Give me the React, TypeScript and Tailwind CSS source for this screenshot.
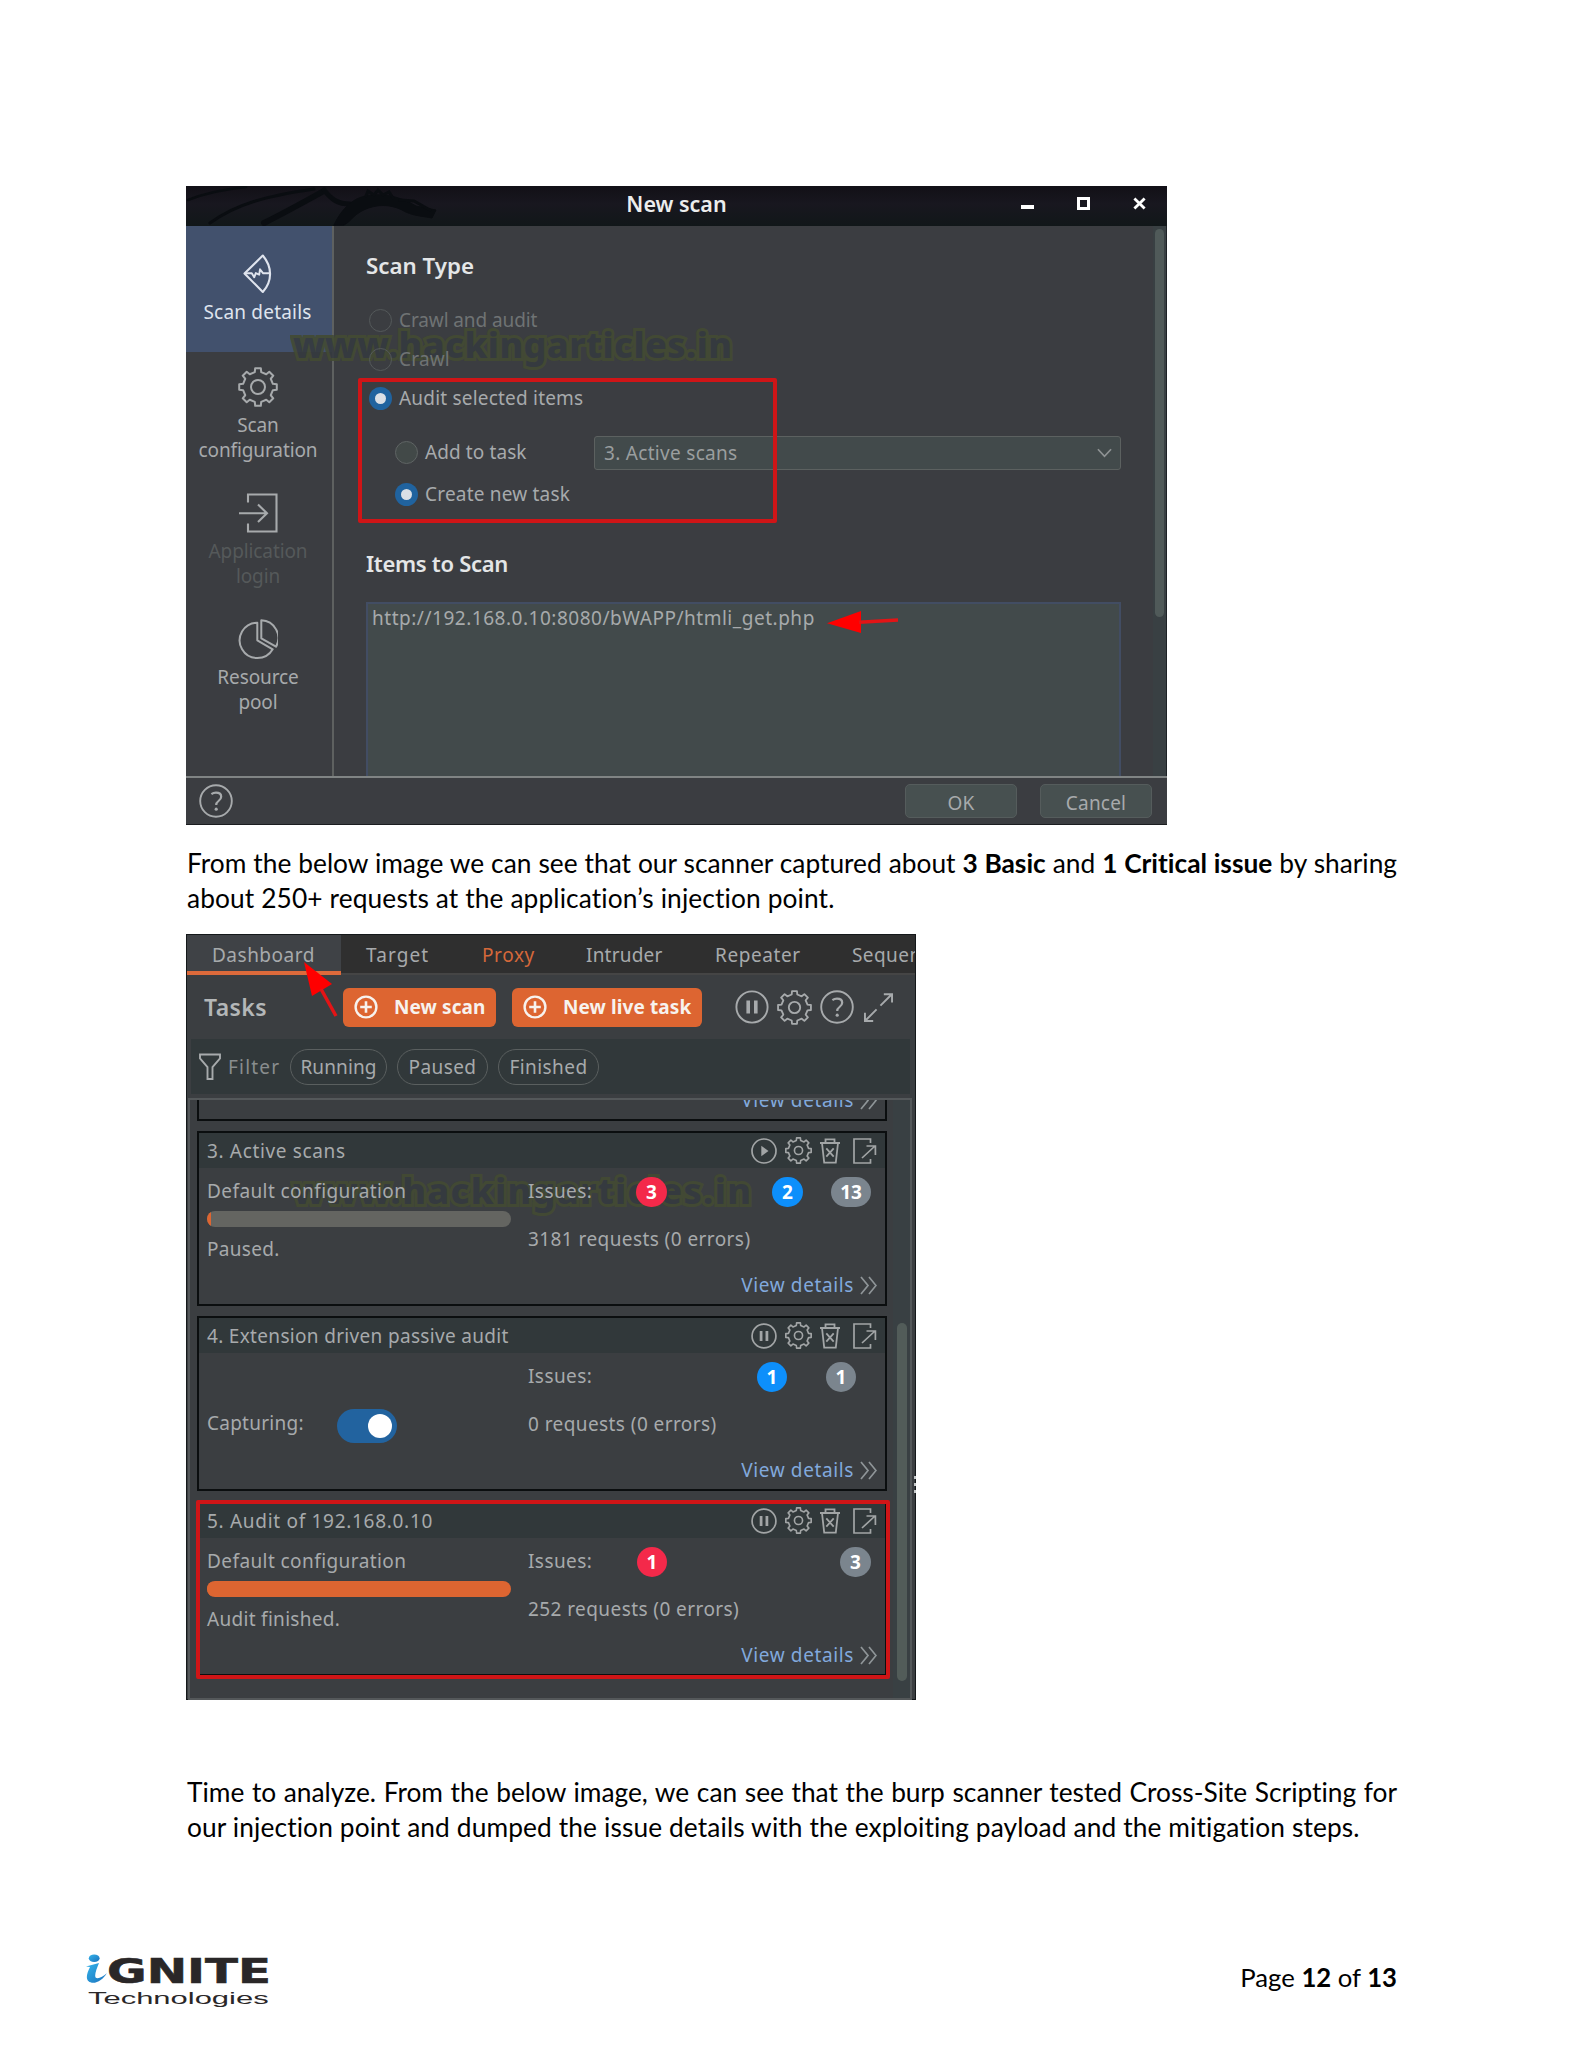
import type { ReactNode } from "react";

type IconProps = { className?: string };

function gearPath(c: number, outer: number, inner: number, teeth = 8) {
  const pts: string[] = [];
  const step = (Math.PI * 2) / teeth;
  const at = (r: number, a: number) =>
    `${(c + r * Math.cos(a)).toFixed(2)} ${(c + r * Math.sin(a)).toFixed(2)}`;
  for (let i = 0; i < teeth; i++) {
    const a = i * step - Math.PI / 2;
    pts.push(at(inner, a - step * 0.27), at(outer, a - step * 0.19), at(outer, a + step * 0.19), at(inner, a + step * 0.27));
  }
  return `M${pts.join("L")}Z`;
}

const GEAR = gearPath(20, 19, 15.2);

function Gear({ className = "", hub = 7, sw = 1.8 }: IconProps & { hub?: number; sw?: number }) {
  return (
    <svg viewBox="0 0 40 40" className={className} fill="none" stroke="currentColor" strokeWidth={sw} strokeLinejoin="round">
      <path d={GEAR} />
      <circle cx="20" cy="20" r={hub} />
    </svg>
  );
}

function Help({ className = "" }: IconProps) {
  return (
    <svg viewBox="0 0 34 34" className={className} fill="none" stroke="currentColor" strokeWidth="1.9">
      <circle cx="17" cy="17" r="15.8" />
      <path d="M12.4 10.2c1.3-1 2.8-1.5 4.6-1.5 3.2 0 5.2 1.5 5.2 4 0 2-1.1 3-2.7 4.3-1.7 1.3-2.3 2.2-2.3 4" strokeWidth="2.2" />
      <circle cx="17.2" cy="25.2" r="1.6" fill="currentColor" stroke="none" />
    </svg>
  );
}

function Pause({ className = "", sw = 1.9 }: IconProps & { sw?: number }) {
  return (
    <svg viewBox="0 0 34 34" className={className} fill="none" stroke="currentColor" strokeWidth={sw}>
      <circle cx="17" cy="17" r="15.6" />
      <path d="M13.2 10.5v13M20.8 10.5v13" strokeWidth="3.6" />
    </svg>
  );
}

function Play({ className = "" }: IconProps) {
  return (
    <svg viewBox="0 0 26 26" className={className} fill="none" stroke="currentColor" strokeWidth="1.7">
      <circle cx="13" cy="13" r="12" />
      <path d="M10.3 7.8v10.4l7.2-5.2z" fill="currentColor" stroke="none" />
    </svg>
  );
}

function Trash({ className = "" }: IconProps) {
  return (
    <svg viewBox="0 0 20 26" className={className} fill="none" stroke="currentColor" strokeWidth="1.8">
      <path d="M0 5h20M5.5 5V1.4h9V5M2 5l2.2 19.6h11.6L18 5M6.3 10.3l7.4 8.4M13.7 10.3l-7.4 8.4" />
    </svg>
  );
}

function Export({ className = "" }: IconProps) {
  return (
    <svg viewBox="0 0 24 26" className={className} fill="none" stroke="currentColor" strokeWidth="1.7">
      <path d="M17.5 5V1H1v24h16.5v-4M9 20 22 8M13.5 8H22.4v9" />
    </svg>
  );
}

function Expand({ className = "" }: IconProps) {
  return (
    <svg viewBox="0 0 30 30" className={className} fill="none" stroke="currentColor" strokeWidth="2">
      <path d="M17 13 28.5 1.5M20.5 1.2H29v8.5M13 17 1.5 28.5M1 20.5V29h8.5" />
    </svg>
  );
}

function PlusCircle({ className = "" }: IconProps) {
  return (
    <svg viewBox="0 0 24 24" className={className} fill="none" stroke="currentColor" strokeWidth="2.4">
      <circle cx="12" cy="12" r="10.4" />
      <path d="M12 6.2v11.6M6.2 12h11.6" strokeWidth="2.6" />
    </svg>
  );
}

function FanIcon() {
  return (
    <svg viewBox="0 0 30 40" className="h-[40px] w-[30px]" fill="none" stroke="currentColor" strokeWidth="2.1" strokeLinejoin="round">
      <path d="M1.5 19.5 19.8 1.5C29.5 13 29.5 27 19.8 38Z" />
      <path d="M2 19.3h6.8l2.4 4 1.6-4.2 3.4 1.6.8-5.4 3.2 4h6.6" strokeWidth="1.9" />
    </svg>
  );
}

function LoginIcon() {
  return (
    <svg viewBox="0 0 40 40" className="h-[40px] w-[40px]" fill="none" stroke="currentColor" strokeWidth="2.1">
      <path d="M10 9.5V1.5h28.5v37H10v-8M1 20.3h28M20 11.5l9 8.8-9 8.8" />
    </svg>
  );
}

function PieIcon() {
  return (
    <svg viewBox="0 0 40 42" className="h-[42px] w-[40px]" fill="none" stroke="currentColor" strokeWidth="2" strokeLinejoin="round">
      <path d="M19.3 4.7v17.6l15.4 9A17.7 17.7 0 1 1 19.3 4.7Z" />
      <path d="M23.3 2.3v18l14.7 8.4A17.7 17.7 0 0 0 23.3 2.3Z" />
    </svg>
  );
}

function Watermark({ className = "" }: IconProps) {
  return (
    <div
      className={`pointer-events-none absolute whitespace-nowrap font-['Noto_Sans'] text-[36px] font-extrabold leading-[48px] text-[#353a3f] opacity-90 [-webkit-text-stroke:6px_#434b33] [paint-order:stroke_fill] ${className}`}
    >
      www.hackingarticles.in
    </div>
  );
}

function SideItem({ icon, lines, dim }: { icon: ReactNode; lines: string[]; dim?: boolean }) {
  return (
    <div className="flex h-[126px] flex-col items-center pt-[14px]">
      <div className="flex h-[42px] items-center text-[#a7aaac]">{icon}</div>
      <div className={`mt-[5px] text-center leading-[25px] tracking-[-0.1px] ${dim ? "text-[#55595a]" : "text-[#a7aaac]"}`}>
        {lines.map((l) => (
          <div key={l}>{l}</div>
        ))}
      </div>
    </div>
  );
}

function Radio({ label, state, className = "" }: { label: string; state: "off" | "on" | "disabled"; className?: string }) {
  return (
    <div className={`relative flex items-center gap-[7px] whitespace-nowrap ${state === "disabled" ? "text-[#6f7374]" : "text-[#a7aaac]"} ${className}`}>
      {state === "on" ? (
        <span className="flex size-[23px] items-center justify-center rounded-full bg-[#20639f]">
          <span className="size-[11px] rounded-full bg-[#dbe0e6]" />
        </span>
      ) : (
        <span className={`size-[23px] rounded-full border-[1.5px] ${state === "off" ? "border-[#5f6464] bg-[#424948]" : "border-[#54595a]"}`} />
      )}
      <span>{label}</span>
    </div>
  );
}

function NewScanWindow() {
  return (
    <div className="relative flex h-[639px] w-[981px] flex-col border-b border-[#1b1d20] bg-[#3b3d41] font-['Noto_Sans',sans-serif] text-[19px] tracking-[0.2px] text-[#a7aaac]">
      <div className="relative flex h-[40px] shrink-0 justify-center bg-linear-to-b from-[#121016] via-[#18171f] via-45% to-[#111719]">
        <svg viewBox="0 0 260 40" className="absolute top-0 left-0 h-[40px] w-[260px]" fill="none" stroke="#0a0d11" strokeLinecap="round">
          <path d="M2 14C22 6 40 3 60 1" strokeWidth="2.5" />
          <path d="M24 37C50 18 80 10 128 3" strokeWidth="3" />
          <path d="M78 37C100 26 118 16 136 6" strokeWidth="6" />
          <path d="M138 4C146 14 152 18 164 18" strokeWidth="5" />
          <path d="M148 39C156 22 168 10 186 9C204 8 216 12 230 20L250 24L246 32C236 30 226 30 216 24C200 16 184 20 174 26C166 31 164 36 158 39Z" fill="#0a0d11" strokeWidth="1" />
          <path d="M180 10l2-5 6 4 4-5 5 5 6-3 4 6M214 14l14 1 16 9" strokeWidth="3" />
        </svg>
        <span className="relative text-[21.5px] leading-[36px] font-semibold tracking-normal text-[#eceded]">New scan</span>
        <div className="absolute right-[19px] flex h-[34px] items-center gap-[43px]">
          <span className="mt-[8px] h-[3.5px] w-[13px] bg-white" />
          <span className="size-[13px] border-[3.5px] border-white" />
          <svg viewBox="0 0 14 14" className="mr-0.5 size-[13px]" stroke="#fff" strokeWidth="3">
            <path d="M1.5 1.5l11 11M12.5 1.5l-11 11" />
          </svg>
        </div>
      </div>

      <div className="relative flex h-[550px] overflow-hidden">
        <div className="w-[148px] shrink-0 border-r-2 border-[#5e6160]">
          <div className="flex h-[126px] flex-col items-center bg-[#42516d] pt-[28px] pr-[3px] text-[#dfe4ee]">
            <FanIcon />
            <div className="mt-[6px] leading-[25px]">Scan details</div>
          </div>
          <div className="pr-[2px]">
            <SideItem icon={<Gear className="size-[40px]" sw={2} />} lines={["Scan", "configuration"]} />
            <SideItem icon={<LoginIcon />} lines={["Application", "login"]} dim />
            <SideItem icon={<PieIcon />} lines={["Resource", "pool"]} />
          </div>
        </div>

        <Watermark className="top-[95px] left-[107px] tracking-[0.4px]" />

        <div className="w-[819px] shrink-0 pl-[32px]">
          <h2 className="pt-[24px] text-[22.3px] leading-[32px] font-semibold tracking-normal text-[#e4e6e7]">Scan Type</h2>
          <Radio label="Crawl and audit" state="disabled" className="mt-[19px] h-[39px] pl-[3px] tracking-[-0.1px]" />
          <Radio label="Crawl" state="disabled" className="h-[39px] pl-[3px]" />
          <Radio label="Audit selected items" state="on" className="h-[39px] pl-[3px]" />
          <div className="mt-[17px] flex h-[35px] items-center pl-[29px]">
            <Radio label="Add to task" state="off" className="w-[199px] tracking-[0.1px]" />
            <div className="flex h-[34px] w-[527px] items-center justify-between rounded-[3px] border-[1.5px] border-[#5c6160] bg-[#424a4b] pr-[8px] pl-[9px] tracking-[0.3px] text-[#9a9e9f]">
              <span className="mt-px">3. Active scans</span>
              <svg viewBox="0 0 16 10" className="h-[10px] w-[15px]" fill="none" stroke="#8e9293" strokeWidth="1.8">
                <path d="M1 1l7 7.5L15 1" />
              </svg>
            </div>
          </div>
          <Radio label="Create new task" state="on" className="mt-[5px] h-[39px] pl-[29px]" />
          <h2 className="mt-[33px] text-[22px] leading-[32px] font-semibold tracking-[-0.3px] text-[#e4e6e7]">Items to Scan</h2>
          <div className="mt-[23px] h-[185px] w-[755px] border-2 border-[#424d63] bg-[#424a4b] pt-px pl-[4px] leading-[26px] tracking-[0.52px]">
            http://192.168.0.10:8080/bWAPP/htmli_get.php
          </div>
        </div>

        <div className="flex w-[14px] flex-col items-center border-r border-[#1d2226] bg-[#394043] pt-[3px]">
          <div className="h-[388px] w-[9px] rounded-full bg-[#505a59]" />
        </div>
      </div>

      <div className="flex flex-1 items-center border-t-2 border-[#808484] pr-[15px] pl-[13px]">
        <Help className="size-[34px]" />
        <button className="ml-auto h-[34px] w-[112px] rounded-[5px] border border-[#555c5c] bg-[#475050] pt-px">OK</button>
        <button className="ml-[23px] h-[34px] w-[112px] rounded-[5px] border border-[#555c5c] bg-[#475050] pt-px">Cancel</button>
      </div>

      <div className="absolute top-[192px] left-[172px] h-[145px] w-[419px] rounded-[2px] border-4 border-[#cf1517]" />
      <svg viewBox="0 0 74 24" className="absolute top-[425px] left-[641px] h-[24px] w-[74px]">
        <path d="M0 12.3 34 0V22Z" fill="#f00" />
        <path d="M32 11.2 71 9" stroke="#e31416" strokeWidth="3.5" />
      </svg>
    </div>
  );
}

type Badge = { n: string; color: "red" | "blue" | "gray" };

function IssueBadge({ badge, className = "" }: { badge: Badge; className?: string }) {
  const bg = badge.color === "red" ? "bg-[#f4294a]" : badge.color === "blue" ? "bg-[#0d8ffb]" : "bg-[#7b858e]";
  return (
    <span className={`absolute flex h-[30px] items-center justify-center rounded-full text-[19px] font-bold tracking-normal text-white ${bg} ${className}`}>
      {badge.n}
    </span>
  );
}

function ViewDetails() {
  return (
    <div className="flex items-center gap-[6px] tracking-[0.62px] whitespace-nowrap text-[#82a9dc]">
      View details
      <svg viewBox="0 0 17 19" className="h-[19px] w-[17px]" fill="none" stroke="#8f9598" strokeWidth="1.7">
        <path d="M1 1l7 8.5L1 18M9 1l7 8.5L9 18" />
      </svg>
    </div>
  );
}

function TaskCard({
  title,
  titleClass = "",
  paused,
  watermark,
  left,
  badges,
  requests,
}: {
  title: string;
  titleClass?: string;
  paused?: boolean;
  watermark?: boolean;
  left: ReactNode;
  badges: ReactNode;
  requests: string;
}) {
  return (
    <div className="relative h-[175px] w-[690px] shrink-0 border-2 border-[#0b0e0f]">
      {watermark && <Watermark className="top-[34px] left-[94px] tracking-[1.3px]" />}
      <div className="relative flex h-[35px] items-center bg-[#31383a] pr-[8px] pl-[8px]">
        <span className={`mt-px whitespace-nowrap ${titleClass}`}>{title}</span>
        <div className="ml-auto flex items-center text-[#a2a5a6]">
          {paused ? <Play className="size-[26px]" /> : <Pause className="size-[26px]" sw={2.2} />}
          <Gear className="ml-[8px] size-[27px]" hub={6} sw={2.4} />
          <Trash className="ml-[8px] h-[26px] w-[20px]" />
          <Export className="ml-[13px] h-[26px] w-[24px]" />
        </div>
      </div>
      <div className="relative flex h-[136px] pl-[8px]">
        <div className="w-[321px]">{left}</div>
        <div className="relative flex-1 pt-[10px] leading-[26px]">
          <div>Issues:</div>
          {badges}
          <div className="mt-[22px] whitespace-nowrap">{requests}</div>
        </div>
      </div>
      <div className="absolute right-[8px] bottom-[6px] leading-[26px]">
        <ViewDetails />
      </div>
    </div>
  );
}

function Progress({ status, full }: { status: string; full?: boolean }) {
  return (
    <div className="pt-[10px] leading-[26px]">
      <div>Default configuration</div>
      <div className={`mt-[7px] h-[16px] w-[304px] overflow-hidden rounded-[8px] ${full ? "bg-[#dd6531]" : "bg-[#646561]"}`}>
        <div className="h-full w-[4px] bg-[#dd6531]" />
      </div>
      <div className="mt-[9px] tracking-[0.3px]">{status}</div>
    </div>
  );
}

function Pill({ label, className }: { label: string; className: string }) {
  return (
    <div className={`flex h-[36px] items-center justify-center rounded-full border-[1.5px] border-[#5a5f5f] ${className}`}>
      <span className="mt-px">{label}</span>
    </div>
  );
}

function DashboardWindow() {
  return (
    <div className="relative flex h-[766px] w-[730px] flex-col border border-[#14181a] bg-[#3b3e41] font-['Noto_Sans',sans-serif] text-[19px] tracking-[0.42px] text-[#a7aaac]">
      <div className="flex h-[40px] shrink-0 overflow-hidden border-b-2 border-[#454545] bg-[#2f2f2f] leading-[41px] whitespace-nowrap">
        <div className="relative h-[40px] w-[154px] shrink-0 bg-[#3f4246] pl-[25px] tracking-[0.5px]">Dashboard</div>
        <div className="w-[116px] shrink-0 pl-[25px] tracking-[1.1px]">Target</div>
        <div className="w-[104px] shrink-0 pl-[25px] tracking-[0.6px] text-[#d5683a]">Proxy</div>
        <div className="w-[129px] shrink-0 pl-[25px] tracking-[0.2px]">Intruder</div>
        <div className="w-[137px] shrink-0 pl-[25px] tracking-[0.6px]">Repeater</div>
        <div className="shrink-0 pl-[25px]">Sequencer</div>
      </div>
      <div className="absolute top-[36px] left-0 h-[4px] w-[154px] bg-[#dd6a3b]" />

      <div className="flex h-[64px] shrink-0 items-center pl-[17px]">
        <span className="w-[139px] text-[23px] font-semibold text-[#b4b7b8]">Tasks</span>
        <div className="flex h-[39px] w-[153px] items-center gap-[16px] rounded-[6px] bg-[#dd6531] pl-[11px] font-bold tracking-[0.1px] whitespace-nowrap text-[#f7f2ee]">
          <PlusCircle className="size-[24px]" />
          New scan
        </div>
        <div className="ml-[16px] flex h-[39px] w-[190px] items-center gap-[16px] rounded-[6px] bg-[#dd6531] pl-[11px] font-bold tracking-[0.1px] whitespace-nowrap text-[#f7f2ee]">
          <PlusCircle className="size-[24px]" />
          New live task
        </div>
        <Pause className="ml-[33px] size-[34px]" />
        <Gear className="ml-[8px] size-[35px]" hub={6.5} sw={2.1} />
        <Help className="ml-[8px] size-[34px]" />
        <Expand className="ml-[10px] size-[29px]" />
      </div>

      <div className="mr-[5px] ml-[4px] flex h-[55px] shrink-0 items-center bg-[#31383a] pl-[8px] whitespace-nowrap">
        <svg viewBox="0 0 22 27" className="h-[27px] w-[22px]" fill="none" stroke="#a7aaac" strokeWidth="1.9">
          <path d="M1 1.5h20v4L13.5 14v12h-5V14L1 5.5z" />
        </svg>
        <span className="mt-px ml-[7px] w-[62px] tracking-[1.2px] text-[#898d8e]">Filter</span>
        <Pill label="Running" className="w-[97px] tracking-[0.1px]" />
        <Pill label="Paused" className="ml-[10px] w-[91px]" />
        <Pill label="Finished" className="ml-[10px] w-[101px]" />
      </div>

      <div className="mt-[4px] mr-[3px] ml-px flex h-[602px] shrink-0 border-2 border-[#54585a]">
        <div className="flex flex-1 flex-col gap-[10px] overflow-hidden pl-[7px]">
          <div className="relative h-[21px] w-[690px] shrink-0 overflow-hidden border-x-2 border-b-2 border-[#0b0e0f]">
            <div className="absolute right-[8px] bottom-[6px] leading-[26px]">
              <ViewDetails />
            </div>
          </div>
          <TaskCard
            title="3. Active scans"
            titleClass="tracking-[0.65px]"
            paused
            watermark
            requests="3181 requests (0 errors)"
            left={<Progress status="Paused." />}
            badges={
              <>
                <IssueBadge badge={{ n: "3", color: "red" }} className="top-[9px] left-[108px] w-[31px]" />
                <IssueBadge badge={{ n: "2", color: "blue" }} className="top-[9px] left-[244px] w-[31px]" />
                <IssueBadge badge={{ n: "13", color: "gray" }} className="top-[9px] left-[303px] w-[40px]" />
              </>
            }
          />
          <TaskCard
            title="4. Extension driven passive audit"
            titleClass="tracking-[0.32px]"
            requests="0 requests (0 errors)"
            left={
              <div className="flex pt-[57px] leading-[26px] tracking-[0.25px]">
                <span className="w-[130px]">Capturing:</span>
                <span className="mt-[-1px] flex h-[34px] w-[60px] items-center justify-end rounded-full bg-[#22639f] pr-[5px]">
                  <span className="size-[24px] rounded-full bg-white" />
                </span>
              </div>
            }
            badges={
              <>
                <IssueBadge badge={{ n: "1", color: "blue" }} className="top-[9px] left-[229px] w-[30px]" />
                <IssueBadge badge={{ n: "1", color: "gray" }} className="top-[9px] left-[298px] w-[30px]" />
              </>
            }
          />
          <TaskCard
            title="5. Audit of 192.168.0.10"
            titleClass="tracking-[0.7px]"
            requests="252 requests (0 errors)"
            left={<Progress status="Audit finished." full />}
            badges={
              <>
                <IssueBadge badge={{ n: "1", color: "red" }} className="top-[9px] left-[109px] w-[30px]" />
                <IssueBadge badge={{ n: "3", color: "gray" }} className="top-[9px] left-[312px] w-[31px]" />
              </>
            }
          />
        </div>
        <div className="w-[17px] shrink-0 bg-[#394043] pt-[223px] pl-[4px]">
          <div className="h-[358px] w-[10px] rounded-full bg-[#525c59]" />
        </div>
      </div>

      <div className="absolute top-[565px] left-[9px] h-[179px] w-[694px] rounded-[2px] border-4 border-[#d01517]" />
      <svg viewBox="0 0 34 56" className="absolute top-[27px] left-[117px] h-[56px] w-[34px]">
        <path d="M0 0 28 22 8 34Z" fill="#f00" />
        <path d="M17 27 32 54" stroke="#e31416" strokeWidth="3.5" />
      </svg>
      <div className="absolute top-[541px] -right-px flex flex-col gap-[4px]">
        <span className="h-[3px] w-[2px] bg-[#c5c8c9]" />
        <span className="h-[3px] w-[2px] bg-[#c5c8c9]" />
        <span className="h-[3px] w-[2px] bg-[#c5c8c9]" />
      </div>
    </div>
  );
}

function Logo() {
  return (
    <div className="h-[54px] w-[184px]">
      <div className="flex h-[30px]">
        <svg viewBox="0 0 24 30" className="h-[30px] w-[24px]">
          <defs>
            <linearGradient id="swoosh" x1="0" y1="0" x2="1" y2="1">
              <stop offset="0" stopColor="#35b3ea" />
              <stop offset="1" stopColor="#1a72bd" />
            </linearGradient>
          </defs>
          <ellipse cx="8.2" cy="4.3" rx="5.4" ry="3.8" fill="url(#swoosh)" />
          <path d="M0 12.5 13 9C10.5 15 8 21.5 9.8 23.7c2.5 1.6 7-1 11-4.5-3.5 6-9.5 10.2-15 9.5C-1.5 27.5.5 20 4 13Z" fill="url(#swoosh)" />
        </svg>
        <span className="-ml-[3px] origin-left scale-x-[1.42] font-['DejaVu_Sans'] text-[34px] leading-[35px] font-bold text-[#2a2728] [-webkit-text-stroke:0.6px_#2a2728]">
          GNITE
        </span>
      </div>
      <div className="mt-[5px] ml-[2px] w-fit origin-left scale-x-[1.82] font-['Liberation_Sans'] text-[17px] leading-[20px] text-[#2a2728]">
        Technologies
      </div>
    </div>
  );
}

const LINE = "block whitespace-nowrap tracking-[0.12px]";
const FULL = "block whitespace-nowrap [text-align-last:justify]";

export default function App() {
  return (
    <div className="flex h-[2048px] w-[1583px] flex-col overflow-hidden bg-white pt-[186px] font-['Lato',sans-serif] text-[26.3px] leading-[35px] text-black [font-variant-ligatures:none]">
      <div className="ml-[186px] w-[1211px]">
        <NewScanWindow />
        <p className="mt-[21px] h-[70px] pl-px">
          <span className={FULL}>
            From the below image we can see that our scanner captured about <b>3 Basic</b> and <b>1 Critical issue</b> by sharing
          </span>
          <span className={LINE}>about 250+ requests at the application’s injection point.</span>
        </p>
        <div className="mt-[18px]">
          <DashboardWindow />
        </div>
        <p className="mt-[75px] h-[70px] pl-px">
          <span className={FULL}>
            Time to analyze. From the below image, we can see that the burp scanner tested Cross-Site Scripting for
          </span>
          <span className={LINE}>our injection point and dumped the issue details with the exploiting payload and the mitigation steps.</span>
        </p>
      </div>
      <footer className="mt-[109px] flex justify-between pr-[186px] pl-[86px]">
        <Logo />
        <div className="pt-[6px] text-[25.7px]">
          Page <b>12</b> of <b>13</b>
        </div>
      </footer>
    </div>
  );
}
